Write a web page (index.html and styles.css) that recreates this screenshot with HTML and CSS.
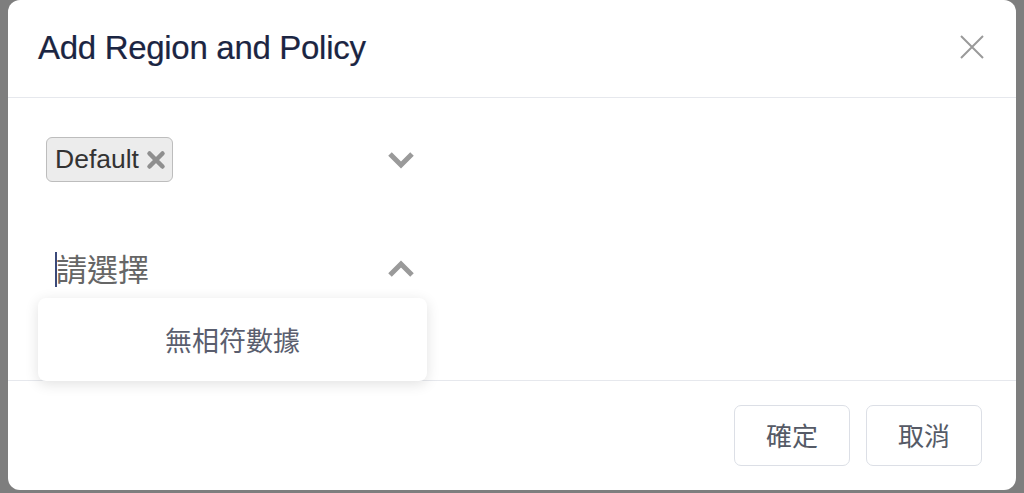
FILE: index.html
```html
<!DOCTYPE html>
<html lang="zh-Hant">
<head>
<meta charset="utf-8">
<link rel="stylesheet" href="styles.css">
</head>
<body>
<div class="backdrop">
  <div class="modal">
    <div class="modal-header">
      <h1 class="modal-title">Add Region and Policy</h1>
      <svg class="close-icon" width="24" height="24" viewBox="0 0 24 24"><path d="M1 1 L23 23 M23 1 L1 23" stroke="#9a9a9a" stroke-width="2" fill="none"/></svg>
    </div>
    <div class="modal-body">
      <div class="select select-region">
        <div class="select-values">
          <span class="tag">Default<svg class="tag-x" width="20" height="20" viewBox="0 0 20 20"><path d="M3.5 3.5 L16.5 16.5 M16.5 3.5 L3.5 16.5" stroke="#8f8f8f" stroke-width="4.5" stroke-linecap="round"/></svg></span>
        </div>
        <svg class="chevron" width="28" height="20" viewBox="0 0 28 20"><path d="M3 4 L14 15 L25 4" stroke="#9a9a9a" stroke-width="5" fill="none" stroke-linejoin="miter"/></svg>
      </div>
      <div class="select select-policy">
        <div class="select-values">
          <span class="caret"></span><span class="placeholder">請選擇</span>
        </div>
        <svg class="chevron" width="28" height="20" viewBox="0 0 28 20"><path d="M3 16 L14 5 L25 16" stroke="#9a9a9a" stroke-width="5" fill="none" stroke-linejoin="miter"/></svg>
      </div>
      <div class="dropdown">
        <span class="empty">無相符數據</span>
      </div>
    </div>
    <div class="modal-footer">
      <button class="btn">確定</button>
      <button class="btn">取消</button>
    </div>
  </div>
</div>
</body>
</html>
```
FILE: styles.css
```css
html, body {
  margin: 0;
  padding: 0;
  width: 1024px;
  height: 493px;
  overflow: hidden;
}
body {
  background: #7e7e7e;
  font-family: "Liberation Sans", "Noto Sans CJK TC", sans-serif;
}
.backdrop {
  padding: 0 8px 0 8px;
  height: 493px;
  box-sizing: border-box;
}
.modal {
  background: #fff;
  height: 490px;
  border-radius: 12px;
  display: flex;
  flex-direction: column;
  position: relative;
}
.modal-header {
  height: 97px;
  border-bottom: 1px solid #e6e8ed;
  display: flex;
  align-items: center;
  justify-content: space-between;
  padding: 0 32px 0 30px;
}
.modal-title {
  margin: 0;
  font-size: 33px;
  font-weight: normal;
  color: #1b2542;
  letter-spacing: -0.3px;
  -webkit-text-stroke: 0.2px #1b2542;
  margin-top: -2px;
}
.close-icon {
  display: block;
  margin-top: -4px;
}
.modal-body {
  height: 282px;
  position: relative;
  padding: 0 0 0 38px;
}
.select {
  width: 369px;
  display: flex;
  align-items: center;
  justify-content: space-between;
  box-sizing: border-box;
}
.select-region {
  margin-top: 39px;
  height: 45px;
}
.select-policy {
  margin-top: 69px;
  height: 36px;
  padding-left: 9px;
}
.select-values {
  display: flex;
  align-items: center;
}
.tag {
  display: inline-flex;
  align-items: center;
  height: 45px;
  box-sizing: border-box;
  border: 1px solid #bdbdbd;
  border-radius: 6px;
  background: #ececec;
  padding: 0 6px 0 8px;
  font-size: 26.5px;
  color: #333;
  gap: 7px;
}
.tag-x {
  display: block;
}
.chevron {
  display: block;
}
.caret {
  display: inline-block;
  width: 2px;
  height: 35px;
  background: #3b4a7a;
}
.placeholder {
  font-family: "Noto Sans CJK TC", sans-serif;
  font-size: 31px;
  color: #666;
  margin-left: -1px;
  margin-top: -3px;
}
.dropdown {
  position: absolute;
  left: 30px;
  top: 200px;
  width: 389px;
  height: 83px;
  background: #fff;
  border-radius: 8px;
  box-shadow: 0 3px 14px rgba(0, 0, 0, 0.12);
  display: flex;
  align-items: center;
  justify-content: center;
  z-index: 2;
}
.empty {
  font-family: "Noto Sans CJK TC", sans-serif;
  font-size: 27px;
  color: #5a5e6e;
}
.modal-footer {
  border-top: 1px solid #e6e8ed;
  flex: 1;
  display: flex;
  justify-content: flex-end;
  align-items: flex-start;
  padding: 24px 34px 0 0;
  gap: 16px;
}
.btn {
  width: 116px;
  height: 61px;
  border: 1px solid #dcdfe6;
  border-radius: 7px;
  background: #fff;
  font-family: "Noto Sans CJK TC", sans-serif;
  font-size: 26px;
  color: #555a66;
  padding: 0 0 3px 0;
}
```
